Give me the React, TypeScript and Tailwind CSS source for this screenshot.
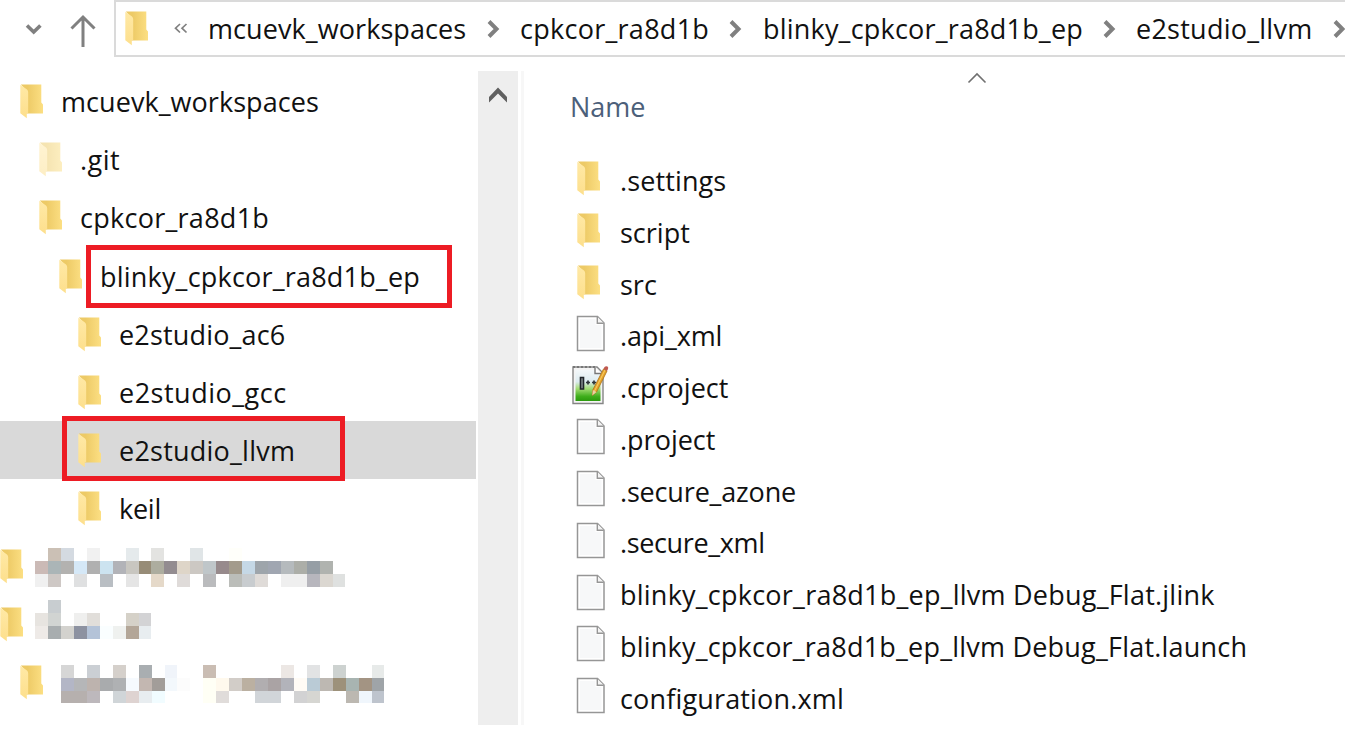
import React from "react";

type Cell = [number, number, string];

const CELL = 12.94;

function FolderIcon({ faded = false }: { faded?: boolean }) {
  return (
    <svg width="24" height="35" viewBox="0 0 24 35" className={faded ? "shrink-0 opacity-50" : "shrink-0"}>
      <defs>
        <linearGradient id="folderBack" x1="0" y1="0" x2="1" y2="0">
          <stop offset="0.3" stopColor="#edca66" />
          <stop offset="1" stopColor="#fcdf83" />
        </linearGradient>
        <linearGradient id="folderFront" x1="0" y1="0" x2="0" y2="1">
          <stop offset="0" stopColor="#ffe9a6" />
          <stop offset="1" stopColor="#fddf8c" />
        </linearGradient>
      </defs>
      <path d="M0.8 0.5H21.3V18.5L23 20.5V29.6H6V6Z" fill="url(#folderBack)" />
      <path d="M0.3 0.8L7 5.6Q8.2 6.6 8.2 8.2V29.3H6.8V34.2L0.3 29.3Z" fill="url(#folderFront)" />
    </svg>
  );
}

function FileIcon() {
  return (
    <svg width="30" height="37" viewBox="0 0 30 37" className="shrink-0">
      <path d="M1.5 1.5H21.5L28 8V35.5H1.5Z" fill="#fff" stroke="#969696" strokeWidth="1.5" />
      <path d="M4 4H19.5V10H25.5V33H4Z" fill="#f7f8f9" />
      <path d="M21.3 1.8V8.2H27.8" fill="#f4f4f4" stroke="#969696" strokeWidth="1.4" />
    </svg>
  );
}

function NotepadIcon() {
  return (
    <svg width="37" height="40" viewBox="0 0 37 40" className="shrink-0">
      <defs>
        <linearGradient id="pad" x1="0" y1="0" x2="0" y2="1">
          <stop offset="0" stopColor="#f4f8fa" />
          <stop offset="0.38" stopColor="#dcebf0" />
          <stop offset="0.6" stopColor="#a3dc74" />
          <stop offset="0.85" stopColor="#3fae1c" />
          <stop offset="1" stopColor="#2b9a0d" />
        </linearGradient>
      </defs>
      <path d="M1 2H25L31 8V38.5H1Z" fill="#f4f4f4" stroke="#858585" strokeWidth="1.4" />
      <path d="M3.5 5H24L28.5 10V36H3.5Z" fill="url(#pad)" />
      <path d="M1 2H25" stroke="#777" strokeWidth="2" strokeDasharray="2 2" />
      <path d="M23 3V8.5H29" fill="#fff" stroke="#777" strokeWidth="1.4" />
      <path d="M8.5 12.5H11.5V24H8.5Z" fill="#8b9296" stroke="#20252a" strokeWidth="1.6" />
      <path d="M14 17.5H18M20 17.5H24M16 15.5V19.5M22 15.5V19.5" stroke="#30363a" strokeWidth="1.7" />
      <path d="M31.5 4L35 6L24.5 27L20.3 30.5L20.8 25Z" fill="#e7a52a" stroke="#a86f17" strokeWidth="0.8" />
      <path d="M33 5L22.5 26" stroke="#f8cd66" strokeWidth="1" />
      <path d="M20.3 30.5L20.8 25L24.5 27Z" fill="#ead1a3" />
      <path d="M31.5 4L32.5 2Q34 0.5 35.5 1.6Q36.6 2.5 36 4L35 6Z" fill="#c05a50" />
    </svg>
  );
}

function Crumb({ width }: { width: string }) {
  return (
    <div className={"flex shrink-0 justify-center " + width}>
      <svg width="13" height="20" viewBox="0 0 13 20">
        <path d="M2 2.5L9.5 10L2 17.5" fill="none" stroke="#808080" strokeWidth="4" />
      </svg>
    </div>
  );
}

function Mosaic({ cells, cols, className }: { cells: Cell[]; cols: number; className: string }) {
  return (
    <svg
      width={cols * CELL}
      height={3 * CELL}
      viewBox={"0 0 " + cols + " 3"}
      shapeRendering="crispEdges"
      className={"shrink-0 " + className}
    >
      {cells.map(([x, y, fill], i) => (
        <rect key={i} x={x} y={y} width="1" height="1" fill={fill} />
      ))}
    </svg>
  );
}

const mosaicA: Cell[] = [
  [1, 0, "#cbc0b5"], [2, 0, "#d4dae1"], [4, 0, "#f1f1f1"], [7, 0, "#e5eaec"], [9, 0, "#e3e3e1"], [12, 0, "#e0e5e7"], [15, 0, "#fffffa"],
  [0, 1, "#cbbab6"], [1, 1, "#abb5b7"], [2, 1, "#b3b2b0"], [3, 1, "#d5e8f7"], [4, 1, "#b0b0b0"], [5, 1, "#cce3f0"], [6, 1, "#b2b3b8"],
  [7, 1, "#c8c6c0"], [8, 1, "#978c77"], [9, 1, "#adad9f"], [10, 1, "#938c90"], [11, 1, "#ded5c8"], [12, 1, "#ccc8c3"], [13, 1, "#bfc6c9"],
  [14, 1, "#978a8c"], [15, 1, "#a39b8c"], [16, 1, "#c5d8e6"], [17, 1, "#9ea5ab"], [18, 1, "#a0a6b1"], [19, 1, "#b5babd"], [20, 1, "#acaea8"],
  [21, 1, "#969ea5"], [22, 1, "#b0b3af"],
  [0, 2, "#f0f0f0"], [1, 2, "#cec8c5"], [3, 2, "#dfe0e1"], [5, 2, "#b9bec3"], [7, 2, "#e5e5e5"], [9, 2, "#e5d9c9"], [11, 2, "#dfdbd9"],
  [13, 2, "#babbbd"], [15, 2, "#bbbdb9"], [16, 2, "#c8cccf"], [17, 2, "#dfdbd8"], [19, 2, "#efefef"], [20, 2, "#efefef"], [21, 2, "#b7b6bd"],
  [22, 2, "#dbd7d1"], [23, 2, "#dfe1e0"],
];

const mosaicB: Cell[] = [
  [1, 0, "#c8cdd0"],
  [0, 1, "#e7e4e0"], [1, 1, "#d1d4d2"], [3, 1, "#efefee"], [4, 1, "#e1deda"], [7, 1, "#d5d1c8"], [8, 1, "#d3d3d5"],
  [0, 2, "#eeeae7"], [1, 2, "#a8adaf"], [2, 2, "#d3d2ce"], [3, 2, "#8d92a1"], [4, 2, "#b4c3d8"], [5, 2, "#fafeff"], [6, 2, "#eff1ef"],
  [7, 2, "#b3a698"], [8, 2, "#e8edf0"],
];

const mosaicC: Cell[] = [
  [0, 0, "#d6d6d6"], [2, 0, "#cbcfd4"], [4, 0, "#d5d0cb"], [6, 0, "#a9aeb1"], [8, 0, "#f0f4fa"], [11, 0, "#cabdb3"], [17, 0, "#ece7e4"],
  [19, 0, "#e2e3e4"], [21, 0, "#cdd2d0"], [24, 0, "#e7eae9"],
  [0, 1, "#b3b6c6"], [1, 1, "#b5b6b8"], [2, 1, "#bdb3ae"], [3, 1, "#a9abad"], [4, 1, "#afb1b3"], [5, 1, "#f6fafe"], [6, 1, "#c3b7b1"],
  [7, 1, "#a29d99"], [8, 1, "#f3f8fc"], [9, 1, "#fcfcfc"], [11, 1, "#fffff5"], [12, 1, "#fff9ed"], [13, 1, "#d2cdc8"], [14, 1, "#bbb0a1"],
  [15, 1, "#b1aeb0"], [16, 1, "#aaa3a4"], [17, 1, "#b2b3ba"], [18, 1, "#fffbf5"], [19, 1, "#bacbd6"], [20, 1, "#bdb8b2"], [21, 1, "#9d917a"],
  [22, 1, "#a8b4b1"], [23, 1, "#a39483"], [24, 1, "#9fa4a8"],
  [0, 2, "#b6b0ae"], [1, 2, "#b6b0ae"], [2, 2, "#bdb8bc"], [4, 2, "#d0d5d8"], [5, 2, "#ded3d1"], [6, 2, "#e8edf0"], [7, 2, "#f1fcff"],
  [11, 2, "#fffff5"], [12, 2, "#e0dcda"], [15, 2, "#d1d5d9"], [16, 2, "#d1d5d9"], [18, 2, "#d2d2d3"], [19, 2, "#d6d6d2"], [22, 2, "#bcb8b1"],
  [23, 2, "#f0f6fc"], [24, 2, "#bec4cd"],
];

const tree = [
  { name: "mcuevk_workspaces", indent: "pl-[20px]", spacing: "tracking-[0.06px]" },
  { name: ".git", indent: "pl-[39px]", spacing: "tracking-[0.5px]", faded: true },
  { name: "cpkcor_ra8d1b", indent: "pl-[39px]", spacing: "tracking-[0.27px]" },
  { name: "blinky_cpkcor_ra8d1b_ep", indent: "pl-[59px]", spacing: "tracking-[0.2px]", mark: "left-[86px] top-[-2px] w-[366px] h-[63px]" },
  { name: "e2studio_ac6", indent: "pl-[78px]", spacing: "tracking-[0.17px]" },
  { name: "e2studio_gcc", indent: "pl-[78px]", spacing: "tracking-[0.5px]" },
  { name: "e2studio_llvm", indent: "pl-[78px]", spacing: "tracking-[0.23px]", selected: true, mark: "left-[62px] top-[-5px] w-[283px] h-[65px]" },
  { name: "keil", indent: "pl-[78px]", spacing: "tracking-[-0.25px]" },
];

const files = [
  { name: ".settings", kind: "folder", spacing: "tracking-[0.12px]" },
  { name: "script", kind: "folder", spacing: "tracking-[0px]" },
  { name: "src", kind: "folder", spacing: "tracking-[0px]" },
  { name: ".api_xml", kind: "file", spacing: "tracking-[-0.12px]" },
  { name: ".cproject", kind: "notepad", spacing: "tracking-[0px]" },
  { name: ".project", kind: "file", spacing: "tracking-[0px]" },
  { name: ".secure_azone", kind: "file", spacing: "tracking-[-0.17px]" },
  { name: ".secure_xml", kind: "file", spacing: "tracking-[-0.36px]" },
  { name: "blinky_cpkcor_ra8d1b_ep_llvm Debug_Flat.jlink", kind: "file", spacing: "tracking-[0.23px]" },
  { name: "blinky_cpkcor_ra8d1b_ep_llvm Debug_Flat.launch", kind: "file", spacing: "tracking-[0.21px]" },
  { name: "configuration.xml", kind: "file", spacing: "tracking-[0.16px]" },
];

export default function App() {
  return (
    <div className="flex h-[742px] w-[1345px] flex-col overflow-hidden bg-white font-['Open_Sans',sans-serif] text-[27px] leading-none text-[#111] whitespace-nowrap">
      <header className="flex h-[57px] shrink-0">
        <div className="flex w-[114px] shrink-0 items-center pl-[25px]">
          <svg width="18" height="14" viewBox="0 0 18 14">
            <path d="M2 3.5L8.7 10L15.4 3.5" fill="none" stroke="#808080" strokeWidth="3.6" />
          </svg>
          <svg width="28" height="34" viewBox="0 0 28 34" className="ml-[26px] mt-[5px]">
            <path d="M14 33V3M2.5 14.5L14 3L25.5 14.5" fill="none" stroke="#808080" strokeWidth="3" />
          </svg>
        </div>
        <div className="flex flex-1 items-center overflow-hidden border-2 border-r-0 border-[#dadada] pl-[9px]">
          <FolderIcon />
          <svg width="14" height="11" viewBox="0 0 14 11" className="ml-[25px] shrink-0">
            <path d="M6 1L1.5 5.2L6 9.5M12.5 1L8 5.2L12.5 9.5" fill="none" stroke="#808080" strokeWidth="1.7" />
          </svg>
          <span className="ml-[20px] w-[258px] shrink-0 tracking-[0.08px]">mcuevk_workspaces</span>
          <Crumb width="w-[54px]" />
          <span className="w-[188px] shrink-0 tracking-[0.27px]">cpkcor_ra8d1b</span>
          <Crumb width="w-[55px]" />
          <span className="w-[319px] shrink-0 tracking-[0.2px]">blinky_cpkcor_ra8d1b_ep</span>
          <Crumb width="w-[54px]" />
          <span className="w-[176px] shrink-0 tracking-[0.25px]">e2studio_llvm</span>
          <Crumb width="w-[54px]" />
        </div>
      </header>

      <div className="flex flex-1 overflow-hidden">
        <nav className="flex w-[476px] shrink-0 flex-col pt-[15px]">
          {tree.map((t) => (
            <div
              key={t.name}
              className={"relative flex h-[58.2px] shrink-0 items-center " + t.indent + (t.selected ? " bg-[#d9d9d9]" : "")}
            >
              <div className="mt-[1px] flex"><FolderIcon faded={t.faded} /></div>
              <span className={"ml-[17px] mt-[1px] " + t.spacing}>{t.name}</span>
              {t.mark && <div className={"absolute border-[5px] border-[#ed1c24] " + t.mark} />}
            </div>
          ))}
          <div className="flex h-[58.2px] shrink-0 items-center">
            <FolderIcon />
            <Mosaic cells={mosaicA} cols={24} className="ml-[10.6px] mt-[2px]" />
          </div>
          <div className="flex h-[58.2px] shrink-0 items-center">
            <FolderIcon />
            <Mosaic cells={mosaicB} cols={9} className="ml-[10.6px] mb-[11px]" />
          </div>
          <div className="flex h-[58.2px] shrink-0 items-center pl-[20px]">
            <FolderIcon />
            <Mosaic cells={mosaicC} cols={25} className="ml-[16.5px] mt-[2px]" />
          </div>
        </nav>

        <div className="ml-[2px] mt-[14px] flex h-[654px] shrink-0">
          <div className="flex w-[40px] justify-center bg-[#eeeeee] pt-[16px]">
            <svg width="20" height="16" viewBox="0 0 20 16">
              <path d="M10 0.5L19 10V15.5L10 6.5L1 15.5V10Z" fill="#606060" />
            </svg>
          </div>
          <div className="ml-[3px] w-[3px] bg-[#f7f7f7]" />
        </div>

        <main className="flex flex-1 flex-col">
          <div className="flex h-[97.6px] shrink-0 items-start pl-[46px]">
            <span className="mt-[36px] w-[397px] text-[#4c607a]">Name</span>
            <svg width="20" height="12" viewBox="0 0 20 12" className="mt-[15px]">
              <path d="M1.5 10.5L10 2L18.5 10.5" fill="none" stroke="#707070" strokeWidth="1.6" />
            </svg>
          </div>
          {files.map((f) => (
            <div key={f.name} className="flex h-[51.77px] shrink-0 items-center pl-[48px]">
              <div className="flex w-[48px] shrink-0 items-center">
                {f.kind === "folder" && <div className="mb-[3px] ml-[5px] flex"><FolderIcon /></div>}
                {f.kind === "file" && <div className="mb-[5px] ml-[3.5px] flex"><FileIcon /></div>}
                {f.kind === "notepad" && <div className="mb-[5px] flex"><NotepadIcon /></div>}
              </div>
              <span className={f.spacing}>{f.name}</span>
            </div>
          ))}
        </main>
      </div>
    </div>
  );
}
